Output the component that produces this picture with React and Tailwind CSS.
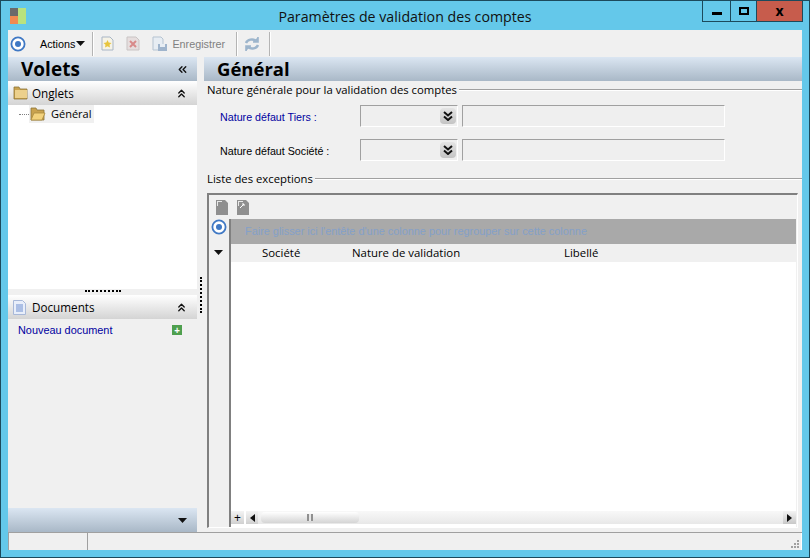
import { ChevronsUp, ChevronsLeft } from "lucide-react";

const arial = "[font-family:'Liberation_Sans',sans-serif]";

const DownTriangle = () => (
  <svg width="9" height="5" viewBox="0 0 9 5"><path d="M0 0h9L4.5 5z" fill="#111" /></svg>
);

const DoubleDown = () => (
  <span className="flex h-[16px] w-[16px] items-center justify-center rounded-sm bg-gradient-to-b from-[#e4e4e4] to-[#c4c4c4]">
    <svg width="10" height="10" viewBox="0 0 10 10" fill="none" stroke="#111" strokeWidth="2">
      <path d="M1 1l4 3.500L9 1M1 5.500L5 9l4-3.500" />
    </svg>
  </span>
);

const Target = ({ size = 16 }) => (
  <svg width={size} height={size} viewBox="0 0 16 16">
    <circle cx="8" cy="8" r="6.600" fill="#fff" stroke="#3f78c4" strokeWidth="1.800" />
    <circle cx="8" cy="8" r="3" fill="#3f78c4" />
  </svg>
);

const Folder = ({ open }) => (
  <svg width="16" height="14" viewBox="0 0 16 14">
    <path d="M1 1h5l1 2h7v10H1z" fill="#c9a24e" stroke="#8d7438" strokeWidth="0.800" />
    {open ? <path d="M1 13l3-7h11l-3 7z" fill="#f3d27c" stroke="#a98a3f" strokeWidth="0.800" /> : <path d="M2 4h12v8H2z" fill="#ecd08c" />}
  </svg>
);

const PageIcon = ({ children, fill = "#8f8f8f" }) => (
  <svg width="12" height="15" viewBox="0 0 12 15">
    <path d="M0 0h9l3 3v12H0z" fill={fill} />
    <path d="M1 1h5v1H2v4H1z" fill="#e8e8e8" />
    {children}
  </svg>
);

const PaneHeader = ({ icon, label, gap }) => (
  <div className="flex h-[24px] shrink-0 items-center bg-gradient-to-b from-[#ffffff] to-[#d4d4d4] pl-[5px] pr-[9px]">
    {icon}
    <span className={`${gap} flex-1 pt-[2px] text-[11.700px] text-black`}>{label}</span>
    <ChevronsUp size={13} strokeWidth={2.500} color="#111" />
  </div>
);

const ComboRow = ({ label, blue }) => (
  <div className="flex h-[22px] items-center">
    <span className={`${arial} w-[156px] pl-[16px] pt-[3px] text-[10.700px] ${blue ? "text-[#0000a0]" : "text-black"}`}>{label}</span>
    <div className="flex h-[22px] w-[98px] items-center justify-end border-b border-l border-r border-t border-[#a0a0a0] border-b-white border-r-white bg-[#efefef] pr-[1px]">
      <DoubleDown />
    </div>
    <div className="ml-[4px] h-[22px] w-[263px] border-b border-l border-r border-t border-[#a0a0a0] border-b-white border-r-white bg-[#efefef]" />
  </div>
);

const GroupTitle = ({ children }) => (
  <div className="flex h-[18px] items-center pl-[3px]">
    <span className="text-[11.300px] text-black">{children}</span>
    <div className="ml-[2px] h-[2px] flex-1 border-t border-[#a0a0a0] bg-white" />
  </div>
);

const Separator = () => <div className="h-[24px] w-[2px] border-l border-[#b4b4b4] bg-white" />;

export default function App() {
  return (
    <div className="flex h-[558px] w-[810px] flex-col overflow-hidden border border-[#1c4a5c] bg-[#64c8ea] [font-family:'Open_Sans',sans-serif]">
      {/* barre de titre */}
      <div className="relative flex h-[29px] shrink-0 items-center justify-center">
        <div className="absolute left-[9px] top-[7px] grid h-[16px] w-[16px] grid-cols-2 grid-rows-2">
          <div className="bg-[#6a6a6a]" />
          <div className="row-span-2 bg-[#b9e27e]" />
          <div className="bg-[#f08a50]" />
        </div>
        <span className="pt-[2px] text-[14.200px] text-[#111]">Paramètres de validation des comptes</span>
        <div className="absolute right-[6px] top-0 flex h-[21px] border-b border-l border-r border-[#1c4a5c]">
          <div className="flex w-[28px] items-center justify-center border-r border-[#1c4a5c]">
            <div className="mt-[4px] h-[3px] w-[10px] bg-black" />
          </div>
          <div className="flex w-[26px] items-center justify-center border-r border-[#1c4a5c]">
            <div className="h-[8px] w-[10px] border-2 border-black" />
          </div>
          <div className="flex w-[45px] items-center justify-center bg-[#c75c4c] text-[14px] font-bold leading-none text-black">x</div>
        </div>
      </div>

      <div className="mx-[7px] flex flex-1 flex-col bg-[#f0f0f0]">
        {/* barre d'outils */}
        <div className={`${arial} flex h-[27px] shrink-0 items-center pl-[2px] text-[10.800px]`}>
          <Target />
          <span className="ml-[14px] pt-[1px] text-black">Actions</span>
          <span className="ml-[1px] mr-[7px]"><DownTriangle /></span>
          <Separator />
          <svg className="ml-[6px]" width="15" height="15" viewBox="0 0 15 15">
            <path d="M2 1h8l3 3v10H2z" fill="#f6f3e6" stroke="#a9b6c6" />
            <path d="M7.500 4l1.200 2.600 2.800.3-2 1.900.5 2.800-2.500-1.400L5 11.600l.5-2.800-2-1.900 2.800-.3z" fill="#e8c53c" />
          </svg>
          <svg className="ml-[11px]" width="14" height="15" viewBox="0 0 14 15">
            <path d="M1 1h9l3 3v10H1z" fill="#e6dede" stroke="#c9c4c4" />
            <path d="M4 5l6 6M10 5l-6 6" stroke="#d88a8a" strokeWidth="2" />
          </svg>
          <svg className="ml-[12px]" width="16" height="16" viewBox="0 0 16 16">
            <path d="M1 1h8l2 2v11H1z" fill="#e7edf3" stroke="#b5c3d1" />
            <path d="M6 8h9v7H6z" fill="#9fb4cc" />
            <path d="M8 8h5v3H8z" fill="#e7edf3" />
          </svg>
          <span className="ml-[4px] pt-[1px] text-[#808080]">Enregistrer</span>
          <span className="ml-[11px]"><Separator /></span>
          <svg className="ml-[5px]" width="18" height="18" viewBox="0 0 18 18" fill="none" stroke="#9db5cc" strokeWidth="2.400">
            <path d="M3 8a6 5 0 0 1 10-2" />
            <path d="M15 10a6 5 0 0 1-10 2" />
            <path d="M15 2v5h-5M3 16v-5h5" strokeWidth="1.600" fill="#9db5cc" />
          </svg>
          <span className="ml-[8px]"><Separator /></span>
        </div>

        <div className="flex min-h-0 flex-1">
          {/* volets */}
          <div className="flex w-[189px] shrink-0 flex-col">
            <div className="flex h-[24px] shrink-0 items-center bg-gradient-to-b from-[#dbe6f2] to-[#a9b8c7] pl-[13px] pr-[8px]">
              <span className="flex-1 text-[19px] font-bold leading-none text-black">Volets</span>
              <ChevronsLeft size={13} strokeWidth={2.500} color="#111" />
            </div>
            <PaneHeader icon={<Folder />} gap="ml-[3px]" label="Onglets" />
            <div className="h-[184px] shrink-0 bg-white pl-[11px]">
              <div className="flex items-center">
                <div className="w-[10px] border-t border-dotted border-[#808080]" />
                <div className="flex h-[18px] items-center bg-[#f0f0f0] pl-[1px] pr-[3px]">
                  <Folder open />
                  <span className="ml-[5px] text-[11px] text-black">Général</span>
                </div>
              </div>
            </div>
            <div className="flex h-[6px] shrink-0 justify-center bg-[#f0f0f0] pt-[1px]">
              <div className="h-[2px] w-[36px] border-t-2 border-dotted border-black" />
            </div>
            <PaneHeader
              icon={
                <svg width="13" height="15" viewBox="0 0 13 15">
                  <path d="M.5.5h9l3 3v11H.5z" fill="#e8eefa" stroke="#a8b8d8" />
                  <path d="M3 5h7M3 7h7M3 9h7M3 11h7" stroke="#6f8fd0" />
                </svg>
              }
              gap="ml-[6px]"
              label="Documents"
            />
            <div className="flex-1 bg-[#f0f0f0] pl-[10px] pr-[15px] pt-[3px]">
              <div className="flex items-center justify-between">
                <span className={`${arial} text-[10.900px] text-[#0000a0]`}>Nouveau document</span>
                <span className="flex h-[10px] w-[10px] items-center justify-center bg-[#4fa04f] text-[10px] font-bold leading-none text-white">+</span>
              </div>
            </div>
            <div className="flex h-[24px] shrink-0 items-center justify-end bg-gradient-to-b from-[#dbe6f2] to-[#a9b8c7] pr-[10px]">
              <DownTriangle />
            </div>
          </div>

          {/* séparateur */}
          <div className="flex w-[7px] shrink-0 items-center justify-center">
            <div className="h-[36px] border-l-2 border-dotted border-black" />
          </div>

          {/* contenu */}
          <div className="flex min-w-0 flex-1 flex-col pb-[4px]">
            <div className="flex h-[24px] shrink-0 items-center bg-gradient-to-b from-[#dbe6f2] to-[#a9b8c7] pl-[13px]">
              <span className="text-[18.500px] font-bold leading-none text-black">Général</span>
            </div>
            <GroupTitle>Nature générale pour la validation des comptes</GroupTitle>
            <div className="mt-[6px] flex flex-col gap-[12px]">
              <ComboRow blue label="Nature défaut Tiers :" />
              <ComboRow label="Nature défaut Société :" />
            </div>
            <div className="mt-[9px]"><GroupTitle>Liste des exceptions</GroupTitle></div>

            {/* grille */}
            <div className="ml-[3px] mr-[4px] mt-[5px] flex min-h-0 flex-1 flex-col border-b border-l-2 border-r border-t-2 border-[#808080] border-b-white border-r-white bg-[#f0f0f0]">
              <div className="flex h-[24px] shrink-0 items-center gap-[9px] pl-[7px]">
                <PageIcon />
                <PageIcon><path d="M3 8l4-4M5 4h2v2" stroke="#fff" fill="none" /></PageIcon>
              </div>
              <div className="flex min-h-0 flex-1">
                <div className="flex w-[22px] shrink-0 flex-col items-center border-r-2 border-[#808080] pr-[1px]">
                  <div className="flex h-[19px] items-start"><Target /></div>
                  <div className="mt-[12px]"><DownTriangle /></div>
                </div>
                <div className="flex min-w-0 flex-1 flex-col pr-[1px]">
                  <div className={`${arial} flex h-[25px] shrink-0 items-center bg-[#a9a9a9] pl-[14px] text-[10.900px] text-[#84a0c8]`}>
                    Faire glisser ici l'entête d'une colonne pour regrouper sur cette colonne
                  </div>
                  <div className="flex h-[18px] shrink-0 items-center bg-[#f0f0f0] pb-[1px] text-[11.400px] text-black">
                    <span className="w-[121px] pl-[31px]">Société</span>
                    <span className="w-[212px]">Nature de validation</span>
                    <span>Libellé</span>
                  </div>
                  <div className="flex-1 bg-white" />
                  <div className="flex h-[13px] shrink-0 items-center bg-white">
                    <span className="flex h-[13px] w-[13px] items-center justify-center bg-gradient-to-b from-[#f4f4f4] to-[#d0d0d0] text-[12px] leading-none text-black">+</span>
                    <span className="ml-[2px] flex h-[13px] w-[12px] items-center justify-center bg-gradient-to-b from-[#f4f4f4] to-[#d0d0d0]">
                      <svg width="5" height="8" viewBox="0 0 5 8"><path d="M5 0v8L0 4z" fill="#111" /></svg>
                    </span>
                    <div className="flex h-[13px] flex-1 items-center bg-gradient-to-b from-[#f8f8f8] to-[#e8e8e8] pl-[3px]">
                      <div className="flex h-[11px] w-[98px] items-center justify-center rounded-sm bg-gradient-to-b from-[#ffffff] to-[#d4d4d4]">
                        <div className="h-[7px] w-[6px] border-x-2 border-[#909090] bg-[#e8e8e8]" />
                      </div>
                    </div>
                    <span className="flex h-[13px] w-[13px] items-center justify-center bg-gradient-to-b from-[#f4f4f4] to-[#c8c8c8]">
                      <svg width="5" height="8" viewBox="0 0 5 8"><path d="M0 0v8l5-4z" fill="#111" /></svg>
                    </span>
                  </div>
                  <div className="h-[3px] shrink-0 bg-white" />
                </div>
              </div>
            </div>
          </div>
        </div>

        {/* barre d'état */}
        <div className="flex h-[18px] shrink-0 border-t border-[#a0a0a0] bg-[#f0f0f0]">
          <div className="w-[80px] border-l border-r border-[#a0a0a0]" />
          <div className="relative flex-1 border-r border-white">
            <div className="absolute bottom-[2px] right-[2px] grid grid-cols-3 gap-[1px]">
              {[0, 0, 1, 0, 1, 1, 1, 1, 1].map((on, i) => (
                <div key={i} className={`h-[2px] w-[2px] ${on ? "bg-[#a0a0a0]" : ""}`} />
              ))}
            </div>
          </div>
        </div>
      </div>
      <div className="h-[7px] shrink-0" />
    </div>
  );
}
